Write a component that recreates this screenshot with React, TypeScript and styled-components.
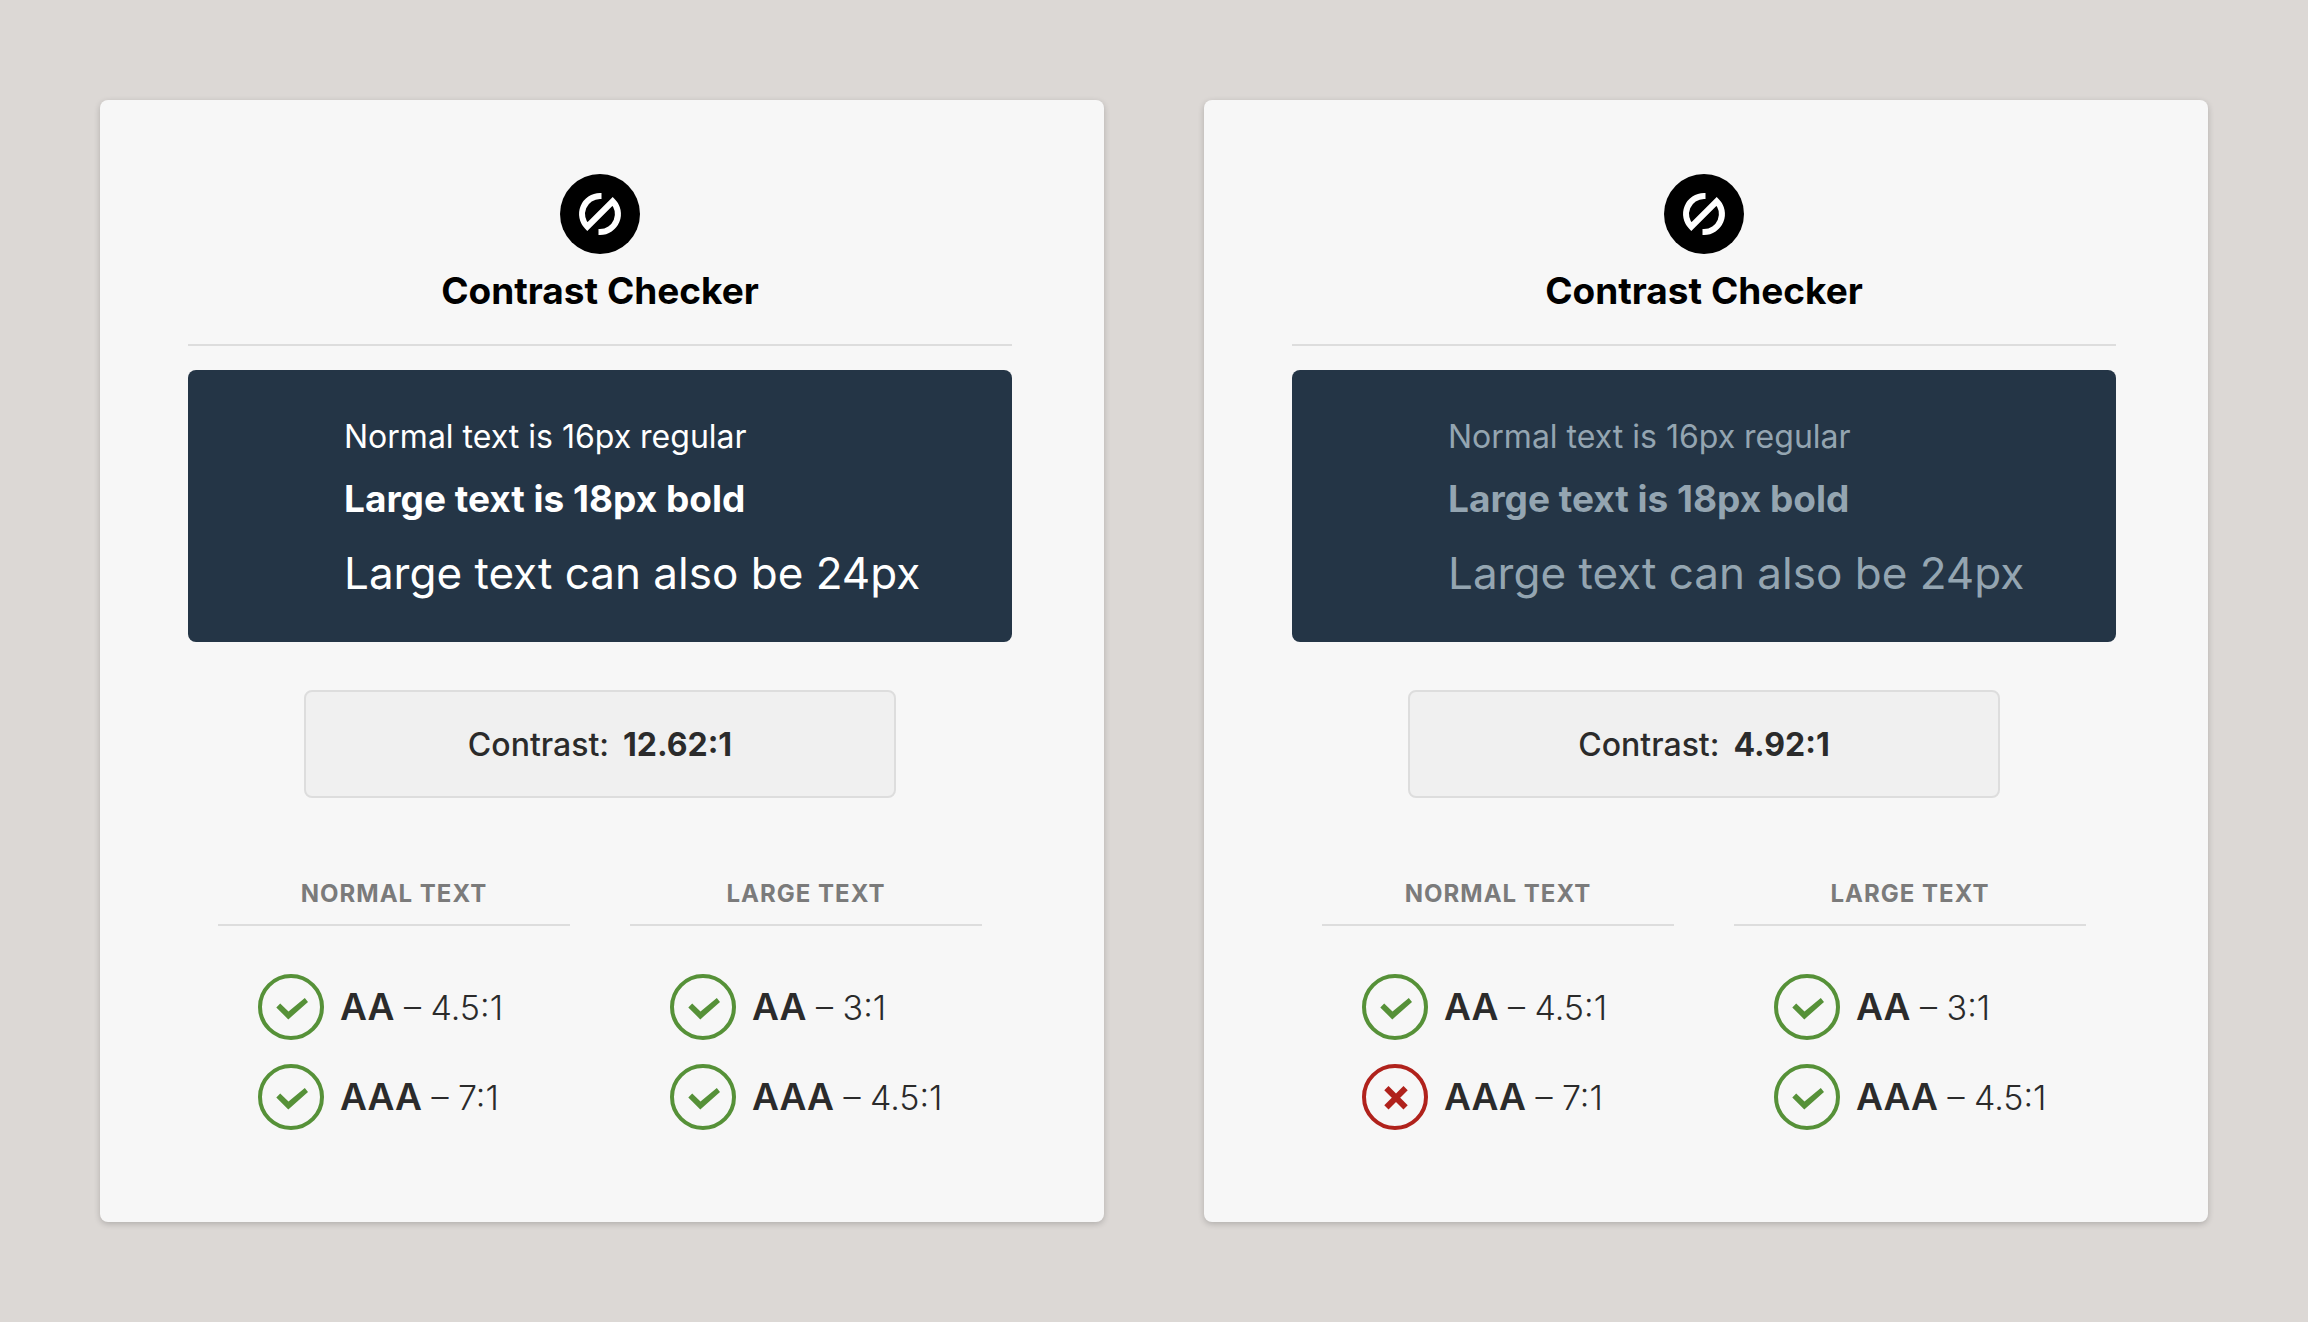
import React from "react";
import styled, { createGlobalStyle } from "styled-components";

const GlobalStyle = createGlobalStyle`
  *, *::before, *::after { box-sizing: border-box; }
  body {
    margin: 0;
    background: #dcd8d5;
    color: #2b2b2b;
    font-family: Inter, "Liberation Sans", sans-serif;
  }
`;

const Page = styled.main`
  display: grid;
  grid-template-columns: repeat(auto-fit, minmax(900px, 1fr));
  gap: 100px;
  min-height: 100vh;
  padding: 100px;
  align-items: start;
`;

const Card = styled.article`
  padding: 74px 92px 92px 88px;
  background: #f7f7f7;
  border-radius: 8px;
  box-shadow: 0 2px 6px rgba(0, 0, 0, 0.2);
`;

const Header = styled.header`
  display: flex;
  flex-direction: column;
  align-items: center;
  gap: 12px;
  padding-bottom: 28px;
  border-bottom: 2px solid #dddddd;
`;

const Title = styled.h1`
  margin: 0;
  color: #000000;
  font-size: 37px;
  font-weight: 700;
  line-height: 50px;
`;

const Preview = styled.section<{ $ink: string }>`
  display: flex;
  flex-direction: column;
  gap: 20px;
  margin-top: 24px;
  padding: 47px 40px 37px 156px;
  border-radius: 8px;
  background: #243546;
  color: ${(p) => p.$ink};
  white-space: nowrap;
`;

const NormalSample = styled.p`
  margin: 0;
  font-size: 32px;
  line-height: 40px;
`;

const BoldSample = styled.p`
  margin: 0;
  font-size: 37px;
  font-weight: 700;
  line-height: 44px;
`;

const LargeSample = styled.p`
  margin: 0;
  font-size: 44px;
  font-weight: 400;
  line-height: 64px;
`;

const Ratio = styled.p`
  display: flex;
  justify-content: center;
  gap: 14px;
  max-width: 592px;
  margin: 48px auto 0;
  padding: 32px 32px 30px;
  border: 2px solid #dddddd;
  border-radius: 8px;
  background: #f0f0f0;
  font-size: 32px;
  font-weight: 500;
  line-height: 42px;
`;

const RatioValue = styled.strong`
  font-weight: 700;
`;

const Columns = styled.div`
  display: grid;
  grid-template-columns: 1fr 1fr;
  gap: 60px;
  margin-top: 80px;
  padding: 0 30px;
`;

const ColumnTitle = styled.h2`
  margin: 0;
  padding-bottom: 14px;
  border-bottom: 2px solid #dddddd;
  color: #7b7b7b;
  font-size: 24px;
  font-weight: 700;
  letter-spacing: 1px;
  line-height: 32px;
  text-align: center;
  text-transform: uppercase;
`;

const Results = styled.ul`
  display: flex;
  flex-direction: column;
  gap: 24px;
  margin: 48px 0 0;
  padding: 0 0 0 40px;
  list-style: none;
`;

const Result = styled.li`
  display: flex;
  align-items: center;
  gap: 16px;
  font-size: 34px;
  font-weight: 300;
  line-height: 50px;
  white-space: nowrap;
`;

const Level = styled.strong`
  font-size: 37px;
  font-weight: 600;
`;

const StatusIcon = styled.svg`
  display: block;
  flex: none;
  width: 66px;
  height: 66px;
`;

function Logo() {
  return (
    <svg width="80" height="80" viewBox="0 0 80 80" fill="none" aria-hidden="true">
      <circle cx="40" cy="40" r="40" fill="#000000" />
      <path
        d="M41.5 22H40A18 18 0 0 0 27.3 52.7L52.7 27.3A18 18 0 0 1 40 58H38.5"
        stroke="#ffffff"
        strokeWidth="6"
      />
    </svg>
  );
}

function Status({ pass }: { pass: boolean }) {
  const color = pass ? "#569138" : "#b0221c";
  return (
    <StatusIcon viewBox="0 0 66 66" fill="none" role="img" aria-label={pass ? "Pass" : "Fail"}>
      <circle cx="33" cy="33" r="31" stroke={color} strokeWidth="4" />
      {pass ? (
        <path d="M18.3 33.6L22.2 29.6L30.5 37.6L46.8 23.9L50 27.9L30.3 45.4Z" fill={color} />
      ) : (
        <path d="M24.4 24.2L43.6 43.4M43.6 24.2L24.4 43.4" stroke={color} strokeWidth="6" />
      )}
    </StatusIcon>
  );
}

type Check = { level: string; minimum: number };

const groups: { title: string; checks: Check[] }[] = [
  {
    title: "Normal text",
    checks: [
      { level: "AA", minimum: 4.5 },
      { level: "AAA", minimum: 7 },
    ],
  },
  {
    title: "Large text",
    checks: [
      { level: "AA", minimum: 3 },
      { level: "AAA", minimum: 4.5 },
    ],
  },
];

function ContrastCard({ ink, ratio }: { ink: string; ratio: number }) {
  return (
    <Card>
      <Header>
        <Logo />
        <Title>Contrast Checker</Title>
      </Header>
      <Preview $ink={ink}>
        <NormalSample>Normal text is 16px regular</NormalSample>
        <BoldSample>Large text is 18px bold</BoldSample>
        <LargeSample>Large text can also be 24px</LargeSample>
      </Preview>
      <Ratio>
        <span>Contrast:</span>
        <RatioValue>{ratio}:1</RatioValue>
      </Ratio>
      <Columns>
        {groups.map((group) => (
          <section key={group.title}>
            <ColumnTitle>{group.title}</ColumnTitle>
            <Results>
              {group.checks.map(({ level, minimum }) => (
                <Result key={level}>
                  <Status pass={ratio >= minimum} />
                  <span>
                    <Level>{level}</Level> – {minimum}:1
                  </span>
                </Result>
              ))}
            </Results>
          </section>
        ))}
      </Columns>
    </Card>
  );
}

export default function App() {
  return (
    <>
      <GlobalStyle />
      <Page>
        <ContrastCard ink="#ffffff" ratio={12.62} />
        <ContrastCard ink="#94a5b1" ratio={4.92} />
      </Page>
    </>
  );
}
